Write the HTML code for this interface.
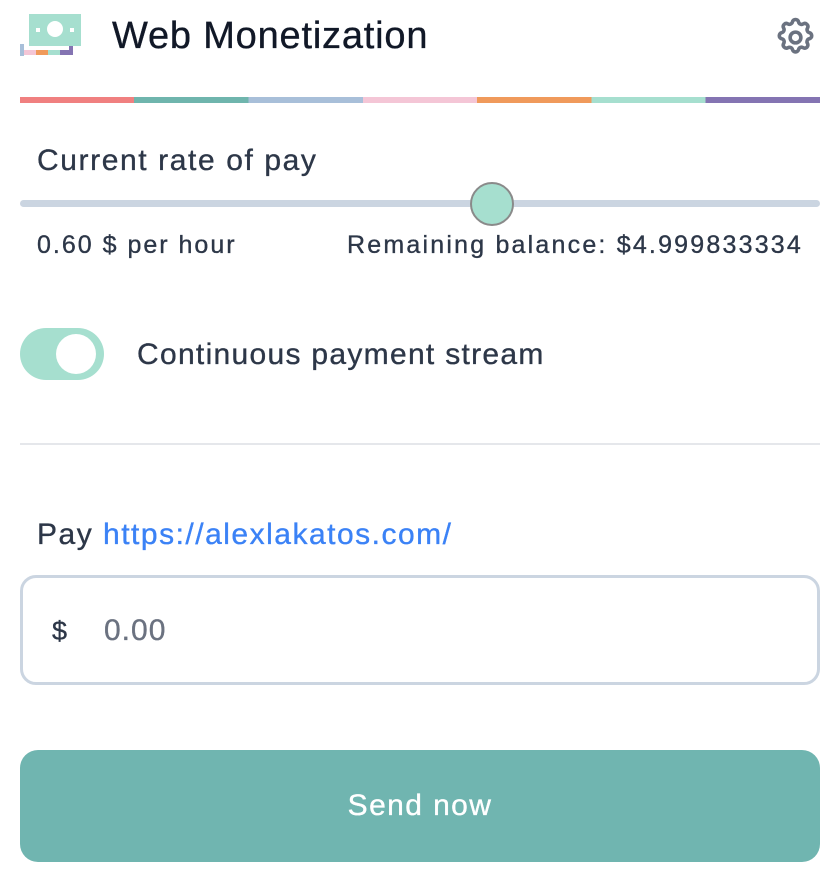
<!DOCTYPE html><html><head><style>
body{margin:0;width:838px;height:881px;background:#fff;font-family:"Liberation Sans",sans-serif;position:relative;overflow:hidden;color:#2d3748}
.a{position:absolute;white-space:nowrap}
.t{-webkit-text-stroke:0.35px currentColor}
</style></head><body>
<div class="a" style="left:20px;top:44px;width:4px;height:12px;background:#a8bfd9"></div>
<div class="a" style="left:24px;top:50px;width:48px;height:5px;background:linear-gradient(90deg,#f4c6d6 0 25%,#f09a5b 25% 50%,#a6dfcf 50% 75%,#8474b2 75%)"></div>
<div class="a" style="left:69px;top:46px;width:4px;height:9px;background:#8474b2"></div>
<div class="a" style="left:29px;top:14px;width:52px;height:32px;background:#a6dfcf"></div>
<div class="a" style="left:47px;top:21px;width:16px;height:16px;border-radius:50%;background:#fff"></div>
<div class="a" style="left:36px;top:28px;width:4px;height:4px;background:#fff"></div>
<div class="a" style="left:70px;top:28px;width:4px;height:4px;background:#fff"></div>
<div class="a t" style="left:112px;top:15px;font-size:38px;color:#111827;letter-spacing:0.8px">Web Monetization</div>
<svg class="a" style="left:774px;top:16px" width="43" height="43" viewBox="0 0 24 24" fill="none" stroke="#6b7280" stroke-width="2" stroke-linejoin="round"><path d="M10.3 3.3c.4-1.8 3-1.8 3.4 0a1.7 1.7 0 0 0 2.6 1.1c1.5-.9 3.3.8 2.4 2.4a1.7 1.7 0 0 0 1 2.5c1.8.4 1.8 3 0 3.4a1.7 1.7 0 0 0-1 2.6c.9 1.5-.9 3.300-2.4 2.4a1.7 1.7 0 0 0-2.6 1c-.4 1.8-3 1.8-3.4 0a1.7 1.7 0 0 0-2.5-1c-1.6.9-3.3-.9-2.4-2.4a1.7 1.7 0 0 0-1.1-2.6c-1.8-.4-1.8-3 0-3.4a1.7 1.7 0 0 0 1.1-2.5c-.9-1.6.8-3.3 2.4-2.4a1.7 1.7 0 0 0 2.5-1.1z"/><circle cx="12" cy="12" r="3"/></svg>
<div class="a" style="left:20px;top:97px;width:800px;height:6px;background:linear-gradient(90deg,#f08080 0 14.28%,#6fb5ad 14.28% 28.57%,#a8bfd9 28.57% 42.85%,#f4c6d6 42.85% 57.14%,#f09a5b 57.14% 71.42%,#a6dfcf 71.42% 85.71%,#8474b2 85.71%)"></div>
<div class="a t" style="left:37px;top:144px;font-size:30px;letter-spacing:1.6px">Current rate of pay</div>
<div class="a" style="left:20px;top:200px;width:800px;height:7px;border-radius:4px;background:#cbd5e1"></div>
<div class="a" style="left:470px;top:182px;width:40px;height:40px;border-radius:50%;background:#a6dfcf;border:2px solid #8a8a8a"></div>
<div class="a t" style="left:37px;top:231px;font-size:25px;letter-spacing:2px">0.60 $ per hour</div>
<div class="a t" style="left:347px;top:231px;font-size:25px;letter-spacing:2.2px">Remaining balance: $4.999833334</div>
<div class="a" style="left:20px;top:328px;width:84px;height:52px;border-radius:26px;background:#a6dfcf"></div>
<div class="a" style="left:56px;top:334px;width:40px;height:40px;border-radius:50%;background:#fff"></div>
<div class="a t" style="left:137px;top:338px;font-size:30px;letter-spacing:1.3px">Continuous payment stream</div>
<div class="a" style="left:20px;top:443px;width:800px;height:2px;background:#e5e7eb"></div>
<div class="a t" style="left:37px;top:518px;font-size:30px;letter-spacing:1.5px">Pay <span style="color:#3b82f6">https://alexlakatos.com/</span></div>
<div class="a" style="left:20px;top:575px;width:794px;height:104px;border:3px solid #cbd5e1;border-radius:16px"></div>
<div class="a t" style="left:52px;top:616px;font-size:27px">$</div>
<div class="a t" style="left:104px;top:614px;font-size:30px;color:#6b7280;letter-spacing:1px">0.00</div>
<div class="a t" style="left:20px;top:750px;width:800px;height:112px;border-radius:18px;background:#70b5b0;color:#fff;font-size:30px;text-align:center;line-height:112px;letter-spacing:1.4px">Send now</div>
</body></html>
